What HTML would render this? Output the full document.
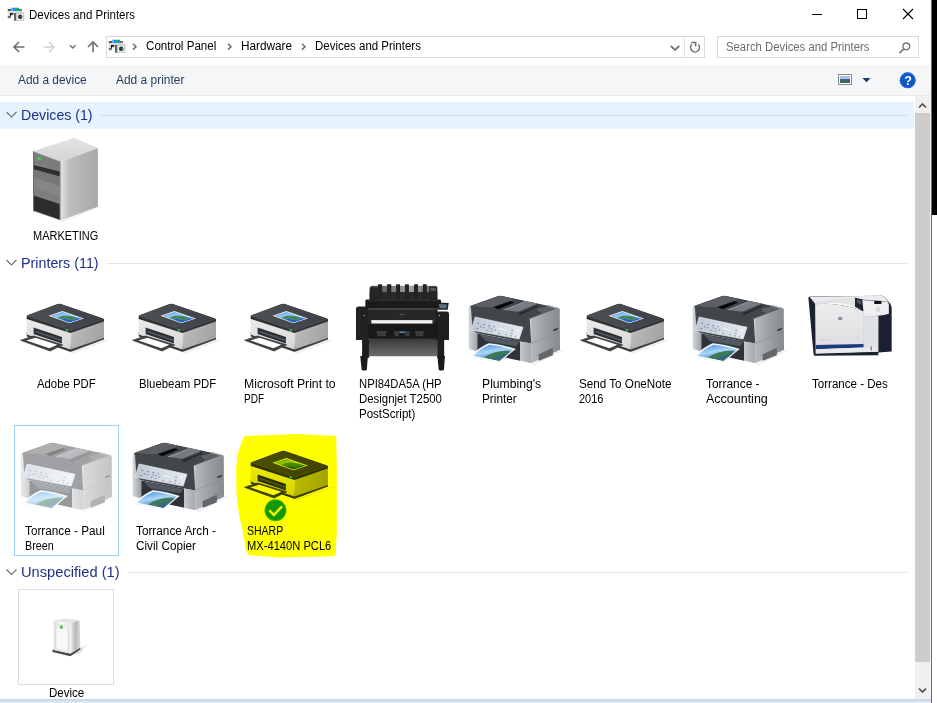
<!DOCTYPE html>
<html lang="en"><head><meta charset="utf-8"><title>Devices and Printers</title>
<style>
html,body{margin:0;padding:0}
body{width:937px;height:703px;position:relative;overflow:hidden;background:#fff;font-family:"Liberation Sans",sans-serif;font-size:12px;color:#000}
.a{position:absolute}
.t{position:absolute;white-space:pre;line-height:20px;height:20px;transform-origin:0 50%}
svg{position:absolute;overflow:visible}

</style></head>
<body>
<svg width="0" height="0" style="position:absolute">
<defs>
<g id="dpicon">
  <rect x="7.8" y="9" width="14.1" height="9.2" fill="#dcdcdc"/>
  <rect x="7.8" y="9" width="14.1" height="2" fill="#5a5a5a"/>
  <rect x="10.9" y="7.8" width="8.1" height="3.2" fill="#1e8cf0"/>
  <rect x="11.2" y="7.8" width="1.4" height="3.2" fill="#7cc4ff"/>
  <rect x="15" y="7.8" width="2.1" height="3.2" fill="#10c050"/>
  <rect x="20" y="9.6" width="1.3" height="1.4" fill="#20f020"/>
  <rect x="7.8" y="16" width="2.6" height="2.2" fill="#6a6e70"/>
  <rect x="10" y="13" width="3.2" height="1.6" fill="#111"/>
  <rect x="10" y="13" width="1.2" height="3.6" fill="#111"/>
  <rect x="11.2" y="15.5" width="3" height="3.3" fill="#fff"/>
  <rect x="14.1" y="13" width="1.8" height="7.8" fill="#555"/>
  <rect x="16.3" y="12.8" width="7.7" height="7.9" fill="#cfcfcf" stroke="#bdbdbd" stroke-width="0.5"/>
  <rect x="17.2" y="13.8" width="5.9" height="6" fill="#f1f1f1"/>
  <circle cx="20.2" cy="16.8" r="2.2" fill="#2d3134"/>
  <path d="M20.2 16.8l1.4-1.6a2.2 2.2 0 0 1 .6 2.6z" fill="#1f8f96"/>
</g>

<!-- simple printer, coordinates local: origin = (16,296) of first instance -->
<linearGradient id="prR" x1="0" y1="0" x2="1" y2="0.3">
  <stop offset="0" stop-color="#e6e6e6"/><stop offset="0.22" stop-color="#b8b8b8"/><stop offset="1" stop-color="#a3a3a3"/>
</linearGradient>
<linearGradient id="prL" x1="0" y1="0" x2="0" y2="1">
  <stop offset="0" stop-color="#ebebeb"/><stop offset="1" stop-color="#d6d6d6"/>
</linearGradient>
<linearGradient id="prT" x1="0" y1="0" x2="1" y2="0">
  <stop offset="0" stop-color="#4d5155"/><stop offset="1" stop-color="#3e4246"/>
</linearGradient>
<linearGradient id="sky" x1="0" y1="0" x2="1" y2="1">
  <stop offset="0" stop-color="#5b9bf0"/><stop offset="0.5" stop-color="#a8d4f5"/><stop offset="1" stop-color="#2f6fd0"/>
</linearGradient>
<g id="prn">
  <path d="M54.4 56.2L89 44.2l7-1-40 14.5z" fill="#000" opacity="0.08"/>
  <!-- base -->
  <path d="M10.7 36L54.4 50 88 39.5V43.6L55.6 55.6Q54.4 56 53.2 55.6L10.7 40.6z" fill="#3a3d40"/>
  <!-- body left -->
  <path d="M10.7 22.5L54.4 36.6V53.4L10.7 38.6z" fill="url(#prL)"/>
  <!-- body right -->
  <path d="M54.4 36.6L88 25.4V42L54.4 53.4z" fill="url(#prR)"/>
  <!-- slot -->
  <path d="M17.6 31.4L45.9 41v6.6L17.6 38z" fill="#2b2e31"/>
  <path d="M19.6 34.4L45.9 43.4v2L19.6 36.4z" fill="#50555a"/>
  <!-- tray -->
  <path d="M4.6 44.3L17.6 40 46.6 48.8 34.2 55z" fill="#3c4043" stroke="#3c4043" stroke-width="0.8" stroke-linejoin="round"/>
  <path d="M10.2 44.4L19.4 41.8 41.4 48.7 33.4 52.2z" fill="#fdfdfd"/>
  <!-- top slab (lip + top) -->
  <path d="M10.7 20.2Q10.7 19.6 12 19.1L41.5 8Q43.2 7.4 45 8L86.5 22.2Q88 22.8 88 23.5V25.6L56 36.6Q54.4 37.2 52.8 36.6L10.7 22.9z" fill="#303336"/>
  <path d="M11.5 19.6L42 8.2Q43.2 7.8 44.6 8.2L87 22.8 55.6 33.8Q54.4 34.2 53 33.8z" fill="url(#prT)"/>
  <path d="M11.5 19.9L53 34Q54.4 34.5 55.6 34L87 23" stroke="#5d6165" stroke-width="0.6" fill="none"/>
  <!-- photo -->
  <path d="M32.5 19.7L46.4 14.9 67.8 22.4 53.4 27.2z" fill="#f4f6f8"/>
  <path d="M34.6 19.7L46.4 15.7 65.6 22.4 53.4 26.4z" fill="url(#sky)"/>
  <path d="M41 21.9Q49 17.8 57 20.6L61.5 22.3 56 24.2Q49 22 44 23z" fill="#3f7f4a" opacity="0.9"/>
  <path d="M44 23Q49 22 56 24.2L62 22.2 65.6 22.4 53.4 26.4z" fill="#2b62c4"/>
  <!-- led -->
  <circle cx="50.7" cy="34.4" r="1.1" fill="#2fe02f"/>
</g>

<!-- server icon: absolute coords -->
<linearGradient id="svR" x1="0" y1="0" x2="1" y2="0">
  <stop offset="0" stop-color="#e2e2e2"/><stop offset="0.25" stop-color="#bdbdbd"/><stop offset="1" stop-color="#a8a8a8"/>
</linearGradient>
<linearGradient id="svT" x1="0" y1="0" x2="0" y2="1">
  <stop offset="0" stop-color="#e4e4e4"/><stop offset="1" stop-color="#d3d3d3"/>
</linearGradient>
<g id="server">
  <path d="M60.7 221L98 207.3 103 206 62 222.5z" fill="#000" opacity="0.06"/>
  <!-- right face -->
  <path d="M60.7 161.6L97.9 147.9V206.8L60.7 220.6z" fill="url(#svR)"/>
  <!-- top face (server) -->
  <path d="M33.1 151.3L74 137.7 97.9 147.9 60.7 161.6z" fill="url(#svT)"/>
  <!-- front face -->
  <path d="M33.1 151.3L60.7 161.6V220.6L33.1 211z" fill="#8a8a8a"/>
  <path d="M33.9 152.6L59.6 162.2V172L33.9 163.4z" fill="#7c7c7c"/>
  <path d="M33.9 165L59.6 171.5V176.5L33.9 169.5z" fill="#2e2e2e"/>
  <path d="M33.9 169.5L59.6 176.5V186L33.9 177.8z" fill="#777"/>
  <path d="M33.9 178.4L59.6 186.6V195L33.9 186.5z" fill="#858585"/>
  <path d="M33.9 187L59.6 195.6V203.5L33.9 195z" fill="#7e7e7e"/>
  <path d="M33.9 195.5L59.6 204V219.6L33.9 210.4z" fill="#2c2c2c"/>
  <path d="M33.1 151.3V211l1 .4V151.6z" fill="#6a6a6a"/>
  <circle cx="39.3" cy="158.6" r="1.6" fill="#2fe03a"/>
</g>

<linearGradient id="mfR" x1="0" y1="0" x2="1" y2="0">
  <stop offset="0" stop-color="#dfe1e4"/><stop offset="0.07" stop-color="#b4b7bb"/><stop offset="0.5" stop-color="#9ca0a4"/><stop offset="1" stop-color="#868a8f"/>
</linearGradient>
<linearGradient id="mfL" x1="0" y1="0" x2="1" y2="0">
  <stop offset="0" stop-color="#d4d7da"/><stop offset="1" stop-color="#9da1a6"/>
</linearGradient>
<linearGradient id="mfP" x1="0" y1="0" x2="1" y2="0">
  <stop offset="0" stop-color="#c3c6ca"/><stop offset="1" stop-color="#a6aaaf"/>
</linearGradient>
<linearGradient id="mfSky" x1="0.2" y1="0" x2="0.6" y2="1">
  <stop offset="0" stop-color="#4f97e6"/><stop offset="0.45" stop-color="#a9d6f6"/><stop offset="1" stop-color="#2a6cc6"/>
</linearGradient>
<linearGradient id="mfCP" x1="0" y1="0" x2="1" y2="0">
  <stop offset="0" stop-color="#bcc5d2"/><stop offset="0.5" stop-color="#d4dbe5"/><stop offset="1" stop-color="#e4e9f0"/>
</linearGradient>
<g id="mfp" transform="scale(0.12804)">
  <path d="M556 618L790 505 830 500 580 625z" fill="#000" opacity="0.07"/>
  <!-- right face -->
  <path d="M545 268L768 180Q779 178 779 192L781 505 556 612z" fill="url(#mfR)"/>
  <path d="M556 457L780 362" stroke="#80848a" stroke-width="4" fill="none"/>
  <path d="M615 540L725 490V548L615 592z" fill="#5d6166"/>
  <path d="M635 532V584M655 523V576M675 514V567M695 505V558M712 497V552" stroke="#7b7f84" stroke-width="4"/>
  <path d="M728 347L765 334V350L728 362z" fill="#3a3d41"/>
  <!-- left pillar -->
  <path d="M68 180Q68 166 82 161L102 155V350L135 375V520L68 500z" fill="url(#mfL)"/>
  <!-- dark body -->
  <path d="M82 164Q76 170 86 178L98 352 135 377 470 442 556 457 545 268 768 180 330 86Q312 82 298 86z" fill="#42464b"/>
  <!-- top face (mfp) -->
  <path d="M98 158L300 88Q312 84 328 88L758 181 545 262z" fill="#43474c"/>
  <path d="M98 158L300 88Q312 84 328 88L430 110 262 172Q200 176 120 166z" fill="#5b5f64"/>
  <path d="M545 262L758 181 768 180 545 270z" fill="#a4a8ad"/>
  <path d="M600 190L700 160 758 181 640 226z" fill="#5d6166"/>
  <path d="M690 158L768 180 756 185 680 164z" fill="#a9adb2"/>
  <!-- ADF -->
  <path d="M262 172L395 126 426 136 300 190z" fill="#08080a"/>
  <path d="M445 222L612 154V168L470 236z" fill="#2a2d31"/>
  <path d="M338 194L508 126 608 144 455 208z" fill="#777c82"/>
  <path d="M338 194L508 126 520 128 352 197z" fill="#92979d"/>
  <!-- control panel -->
  <path d="M118 250L492 330 462 422 88 352z" fill="url(#mfCP)" stroke="#eef1f5" stroke-width="5" stroke-linejoin="round"/>
  <path d="M300 328L378 344 374 364 296 348z" fill="#e9eef5" stroke="#a9b2c0" stroke-width="2"/>
  <g stroke="#5c6b85" stroke-width="6" fill="none">
    <path d="M135 298l14 3M180 308l14 3M222 316l14 3M262 324l10 2"/>
    <path d="M128 338l14 3M155 326l14 3M182 332l10 2M208 352l14 3M222 334l12 3M245 340l10 2M240 360l12 3M270 350l12 3"/>
    <path d="M300 376l12 3M355 386l12 3M400 352l14 3M396 376l14 3M392 396l12 3M428 400l8 2"/>
  </g>
  <circle cx="450" cy="352" r="9" fill="#f6f8fb"/>
  <!-- opening -->
  <path d="M135 378L470 442V592L135 520z" fill="#2f3338"/>
  <path d="M150 385L462 445 440 478 205 440z" fill="#505860"/>
  <!-- right front pillar -->
  <path d="M470 442L556 457V612L470 592z" fill="url(#mfP)"/>
  <!-- paper -->
  <path d="M225 455C300 462 370 480 435 500C395 530 350 568 315 605L85 560C120 515 165 480 225 455z" fill="#f9fbfd" stroke="#d5dbe2" stroke-width="2"/>
  <path d="M230 467C295 473 360 489 413 505C380 532 342 565 309 591L107 552C137 518 177 489 230 467z" fill="url(#mfSky)"/>
  <path d="M185 566C255 525 330 505 398 518C370 540 338 568 309 591z" fill="#3d7a55"/>
  <path d="M250 580C300 550 350 535 385 530C360 550 335 570 309 591z" fill="#2d5f9f" opacity="0.55"/>
</g>

<linearGradient id="djBin" x1="0" y1="0" x2="0" y2="1">
  <stop offset="0" stop-color="#383838"/><stop offset="1" stop-color="#6c6c6c"/>
</linearGradient>
<linearGradient id="djSt" x1="0" y1="0" x2="1" y2="0">
  <stop offset="0" stop-color="#4a4a4a"/><stop offset="0.6" stop-color="#a5a5a5"/><stop offset="1" stop-color="#5a5a5a"/>
</linearGradient>
<g id="dj" transform="scale(0.14225)">
  <!-- stacker -->
  <rect x="145" y="55" width="462" height="60" fill="url(#djSt)"/>
  <rect x="138" y="98" width="476" height="56" fill="#2a2a2a"/>
  <path d="M138 65h58v90h-58zM556 62h58v92h-58z" fill="#262626"/>
  <rect x="565" y="70" width="38" height="22" fill="#555"/>
  <g fill="#232323">
    <rect x="196" y="44" width="30" height="100" rx="4"/><rect x="260" y="44" width="30" height="100" rx="4"/>
    <rect x="324" y="44" width="28" height="100" rx="4"/><rect x="386" y="44" width="28" height="100" rx="4"/>
    <rect x="450" y="44" width="28" height="100" rx="4"/><rect x="512" y="44" width="28" height="100" rx="4"/>
  </g>
  <!-- legs -->
  <path d="M85 430h50v130h-50zM612 430h50v130h-50z" fill="#1d1d1d"/>
  <path d="M72 548h54l-8 98q-18 8-36 0zM614 548h54l-8 98q-18 8-36 0z" fill="#1b1b1b"/>
  <!-- bin -->
  <rect x="133" y="422" width="482" height="128" fill="url(#djBin)"/>
  <!-- body -->
  <path d="M60 200h70v235H42V218q0-18 18-18z" fill="#222"/>
  <rect x="126" y="212" width="490" height="120" fill="#272727"/>
  <path d="M600 236h80q16 0 16 16v183h-96z" fill="#1f1f1f"/>
  <rect x="126" y="322" width="492" height="104" fill="#191919"/>
  <rect x="150" y="296" width="430" height="24" fill="#f2f2f2"/>
  <rect x="130" y="216" width="470" height="5" fill="#6a6a6a"/>
  <g fill="#3d3d3d">
    <path d="M185 372h75l-10 38h-55zM308 374h40l-6 36h-28zM384 374h38l-6 36h-26zM455 372h66l-10 38h-46z"/>
  </g>
  <rect x="348" y="376" width="38" height="10" fill="#5d92d6"/>
  <rect x="350" y="252" width="34" height="8" fill="#555"/>
  <!-- roll cover -->
  <rect x="108" y="152" width="532" height="60" rx="10" fill="#1a1a1a"/>
  <rect x="120" y="158" width="508" height="5" fill="#3c3c3c"/>
  <!-- screen -->
  <path d="M606 172l88 4-7 48h-70z" fill="#1e1e1e"/>
  <path d="M624 183l58 3-4 27h-48z" fill="#5e7389"/>
  <circle cx="101" cy="263" r="5" fill="#9a9a9a"/>
  <circle cx="629" cy="264" r="5" fill="#c8b24a"/>
</g>

<linearGradient id="ljF" x1="0" y1="0" x2="0" y2="1">
  <stop offset="0" stop-color="#ececee"/><stop offset="1" stop-color="#dcdde0"/>
</linearGradient>
<g id="lj" transform="scale(0.12804)">
  <!-- dark frame -->
  <path d="M66 105Q64 92 78 90L640 84Q660 84 690 128Q716 150 716 175L716 520 612 528 612 548 120 552Q108 552 106 540z" fill="#1b2130"/>
  <!-- top -->
  <path d="M72 91L640 84Q658 86 690 130L500 116 430 100 120 148z" fill="#ececee"/>
  <path d="M72 91L120 148V160L68 108z" fill="#2a2f3c"/>
  <!-- front -->
  <path d="M118 150Q300 130 496 205L610 250V522L122 536z" fill="url(#ljF)"/>
  <path d="M118 150Q300 110 430 165L480 200 496 205Q300 130 118 150z" fill="#f6f6f7"/>
  <path d="M120 130Q280 100 430 100L430 168Q300 118 118 152z" fill="#e2e3e5"/>
  <!-- output slot -->
  <path d="M430 100L482 120 486 198 430 170z" fill="#20242c"/>
  <path d="M446 112L476 124 478 150 446 138z" fill="#555b66"/>
  <!-- control column -->
  <path d="M486 118L680 130Q694 134 694 150V225Q660 238 614 240L500 250 496 205z" fill="#eeeff1"/>
  <path d="M500 250L612 240V522H500z" fill="#e1e2e5"/>
  <path d="M500 250L612 240" stroke="#bfc1c6" stroke-width="3"/>
  <path d="M498 205V522" stroke="#c4c6cb" stroke-width="3"/>
  <rect x="580" y="124" width="56" height="24" fill="#0c0c10"/>
  <path d="M590 175l30-6 8 14-6 26-20 4z" fill="#d5d7db"/>
  <!-- blue band -->
  <path d="M124 468L496 460V488L124 502z" fill="#1a3a7c"/>
  <path d="M124 502L496 488 600 486V520L126 534z" fill="#e9eaec"/>
  <rect x="552" y="480" width="8" height="32" fill="#5a5f6a"/>
  <!-- logo -->
  <rect x="298" y="250" width="32" height="24" rx="5" fill="#8a8d94"/>
  <path d="M150 428h90M430 412h36" stroke="#b6b9c0" stroke-width="4"/>
</g>

<linearGradient id="dvF" x1="0" y1="0" x2="1" y2="0">
  <stop offset="0" stop-color="#dcdcdc"/><stop offset="0.5" stop-color="#fafafa"/><stop offset="1" stop-color="#e6e6e6"/>
</linearGradient>
<linearGradient id="dvS" x1="0" y1="0" x2="1" y2="0">
  <stop offset="0" stop-color="#f2f2f2"/><stop offset="0.5" stop-color="#b9b9b9"/><stop offset="1" stop-color="#d8d8d8"/>
</linearGradient>
<g id="dev" transform="scale(0.17492)">
  <path d="M345 430L405 392 445 360 400 420z" fill="#000" opacity="0.12"/>
  <path d="M243 398L345 420 402 386V398L345 436 243 412z" fill="#4a4a4a"/>
  <path d="M250 240Q250 232 258 232L345 248V420L250 400z" fill="url(#dvF)"/>
  <path d="M262 285Q262 252 296 256Q332 262 332 296V408L262 395z" fill="#f7f7f7" stroke="#d0d0d0" stroke-width="3"/>
  <path d="M345 248L392 230Q398 230 398 238L402 386 345 420z" fill="url(#dvS)"/>
  <path d="M256 232L312 220 394 229 345 248z" fill="#e3e3e3"/>
  <circle cx="293" cy="268" r="10" fill="#3db43d"/>
  <circle cx="291" cy="265" r="4" fill="#b5f0a5"/>
</g>
</defs>
</svg>

<!-- window chrome -->
<div class="a" style="left:932px;top:0;width:5px;height:215px;background:#000"></div>
<div class="a" style="left:931px;top:0;width:1px;height:703px;background:#1a84d8"></div>
<!-- title bar icon -->
<svg style="left:7px;top:7px" width="18" height="15" viewBox="7 7 18 15"><use href="#dpicon"/></svg>
<!-- window buttons -->
<svg style="left:805px;top:0" width="120" height="30" viewBox="805 0 120 30">
  <path d="M812 14.5h10" stroke="#000" stroke-width="1" fill="none"/>
  <rect x="857.5" y="9.5" width="9" height="9" stroke="#000" stroke-width="1" fill="none"/>
  <path d="M903 9l10 10M913 9l-10 10" stroke="#000" stroke-width="1.1" fill="none"/>
</svg>
<!-- nav arrows -->
<svg style="left:0;top:30px" width="106" height="35" viewBox="0 30 106 35">
  <path d="M24.5 47H14M19 42l-5 5 5 5" stroke="#6e6e6e" stroke-width="1.6" fill="none"/>
  <path d="M43.5 47H54M49 42l5 5-5 5" stroke="#d2d2d2" stroke-width="1.6" fill="none"/>
  <path d="M70 45.2l2.8 2.8 2.8-2.8" stroke="#6e6e6e" stroke-width="1.3" fill="none"/>
  <path d="M93 52.3V42M88 47l5-5 5 5" stroke="#6e6e6e" stroke-width="1.6" fill="none"/>
</svg>
<!-- address box -->
<div class="a" style="left:106px;top:36px;width:599px;height:22px;border:1px solid #d9d9d9;box-sizing:border-box;background:#fff"></div>
<div class="a" style="left:684px;top:36px;width:1px;height:22px;background:#e1e1e1"></div>
<svg style="left:108px;top:39px" width="18" height="15" viewBox="7 7 18 15"><use href="#dpicon"/></svg>
<svg style="left:128px;top:40px" width="300" height="14" viewBox="128 40 300 14">
  <path d="M133 43.8l3 2.9-3 2.9" stroke="#6a6a6a" stroke-width="1.5" fill="none"/>
  <path d="M228 43.8l3 2.9-3 2.9" stroke="#6a6a6a" stroke-width="1.5" fill="none"/>
  <path d="M302 43.8l3 2.9-3 2.9" stroke="#6a6a6a" stroke-width="1.5" fill="none"/>
</svg>
<svg style="left:665px;top:38px" width="40" height="18" viewBox="665 38 40 18">
  <path d="M670.8 45.9l4.2 4.2 4.2-4.2" stroke="#6f6f6f" stroke-width="1.8" fill="none"/>
  <path d="M698.3 44.6a4.4 4.4 0 1 1-6.4-.2" stroke="#6f6f6f" stroke-width="1.5" fill="none"/>
  <path d="M691.2 42.5h4.4v4" stroke="#6f6f6f" stroke-width="1.5" fill="none"/>
</svg>
<!-- search box -->
<div class="a" style="left:717px;top:36px;width:202px;height:22px;border:1px solid #d9d9d9;box-sizing:border-box;background:#fff"></div>
<svg style="left:896px;top:40px" width="18" height="16" viewBox="896 40 18 16">
  <circle cx="906.3" cy="46.3" r="3.4" stroke="#7a7a7a" stroke-width="1.5" fill="none"/>
  <path d="M903.8 48.8l-4.3 4.3" stroke="#7a7a7a" stroke-width="1.8" fill="none"/>
</svg>
<!-- toolbar -->
<div class="a" style="left:0;top:65px;width:931px;height:30px;background:#f5f6f7;border-bottom:1px solid #e9e9e9"></div>
<svg style="left:836px;top:70px" width="90" height="22" viewBox="836 70 90 22">
  <rect x="838.5" y="74.5" width="13" height="10" fill="#fff" stroke="#8a8a8a" stroke-width="1"/>
  <rect x="840" y="76" width="10" height="7" fill="#3a5f8f"/>
  <rect x="840" y="76" width="10" height="3" fill="#a9c4e4"/>
  <path d="M840 83l4-3 6 3z" fill="#3d6b3d"/>
  <path d="M862.5 78h8l-4 4.3z" fill="#1e395b"/>
  <circle cx="907.7" cy="80.3" r="8" fill="#0b57c4"/>
  <circle cx="907.7" cy="80.3" r="7.3" fill="none" stroke="#2c72d6" stroke-width="0.8"/>
</svg>
<div class="a" style="left:900px;top:71.5px;width:16px;height:18px;line-height:18px;text-align:center;color:#fff;font-weight:bold;font-size:12.5px">?</div>
<!-- scrollbar -->
<div class="a" style="left:915px;top:96px;width:16px;height:603px;background:#f0f0f0"></div>
<div class="a" style="left:915px;top:113px;width:15px;height:549px;background:#cdcdcd"></div>
<svg style="left:915px;top:96px" width="16" height="603" viewBox="915 96 16 603">
  <path d="M919 107.5l3.5-3.5 3.5 3.5" stroke="#505050" stroke-width="1.7" fill="none"/>
  <path d="M919 688.5l3.5 3.5 3.5-3.5" stroke="#505050" stroke-width="1.7" fill="none"/>
</svg>
<!-- bottom strip -->
<div class="a" style="left:0;top:699px;width:931px;height:4px;background:linear-gradient(#c3d2e6,#e6edf6)"></div>
<!-- group headers -->
<div class="a" style="left:0;top:102px;width:914px;height:27px;background:#e5f3ff"></div>
<div class="a" style="left:101px;top:115px;width:806px;height:1px;background:#c5d9ea"></div>
<div class="a" style="left:107px;top:263px;width:800px;height:1px;background:#e2e2e2"></div>
<div class="a" style="left:128px;top:572px;width:779px;height:1px;background:#e2e2e2"></div>
<svg style="left:0;top:100px" width="20" height="500" viewBox="0 100 20 500">
  <path d="M6.5 112l5 5 5-5" stroke="#707070" stroke-width="1.1" fill="none"/>
  <path d="M6.5 260l5 5 5-5" stroke="#707070" stroke-width="1.1" fill="none"/>
  <path d="M6.5 569.5l5 5 5-5" stroke="#707070" stroke-width="1.1" fill="none"/>
</svg>
<!-- selected item box -->
<div class="a" style="left:14px;top:425px;width:105px;height:131px;border:1px solid #99d1ff;box-sizing:border-box;background:#fff"></div>
<!-- device box -->
<div class="a" style="left:18px;top:589px;width:96px;height:96px;border:1px solid #dcdcdc;box-sizing:border-box;background:#fff"></div>
<!-- icons -->
<svg style="left:0;top:130px" width="130" height="100" viewBox="0 130 130 100"><use href="#server"/></svg>
<svg style="left:16px;top:296px" width="100" height="62" viewBox="0 0 100 62"><use href="#prn"/></svg>
<svg style="left:128px;top:296px" width="100" height="62" viewBox="0 0 100 62"><use href="#prn"/></svg>
<svg style="left:240px;top:296px" width="100" height="62" viewBox="0 0 100 62"><use href="#prn"/></svg>
<svg style="left:576px;top:296px" width="100" height="62" viewBox="0 0 100 62"><use href="#prn"/></svg>
<svg style="left:460px;top:285px" width="110" height="90" viewBox="0 0 110 90"><use href="#mfp"/></svg>
<svg style="left:684px;top:285px" width="110" height="90" viewBox="0 0 110 90"><use href="#mfp"/></svg>
<svg style="left:12px;top:432px;opacity:0.5" width="110" height="90" viewBox="0 0 110 90"><use href="#mfp"/></svg>
<svg style="left:124px;top:432px" width="110" height="90" viewBox="0 0 110 90"><use href="#mfp"/></svg>
<svg style="left:350px;top:278px" width="100" height="100" viewBox="0 0 100 100"><use href="#dj"/></svg>
<svg style="left:800px;top:285px" width="100" height="90" viewBox="0 0 100 90"><use href="#lj"/></svg>
<svg style="left:10px;top:580px" width="120" height="120" viewBox="0 0 120 120"><use href="#dev"/></svg>
<svg style="left:240px;top:443px" width="100" height="62" viewBox="0 0 100 62"><use href="#prn"/></svg>
<svg style="left:262px;top:497px" width="28" height="28" viewBox="262 497 28 28">
  <circle cx="275.5" cy="510.3" r="11" fill="#3bb53b"/>
  <circle cx="275.5" cy="510.3" r="10" fill="#12981a"/>
  <path d="M269.3 510.4l4.6 4.6 8.2-8.8" stroke="#fff" stroke-width="2.3" fill="none"/>
</svg>
<svg style="left:230px;top:428px;mix-blend-mode:multiply" width="115" height="140" viewBox="230 428 115 140">
  <path d="M244.7 436L241.7 441.5 237.4 455 236.1 468.5 236.5 495 239.2 516 242.9 532 246 550 248.4 555 279 557.6 327 556.4 335.5 555.7 336.8 532 336.8 465 336.2 436 296 434z" fill="#ffff00"/>
</svg>

<div class="t" style="left:28.90px;top:4.84px;font-size:12px;color:#000;transform:scaleX(0.9582)">Devices and Printers</div>
<div class="t" style="left:146.20px;top:35.84px;font-size:12px;color:#000;transform:scaleX(0.9671)">Control Panel</div>
<div class="t" style="left:240.80px;top:35.84px;font-size:12px;color:#000;transform:scaleX(0.9824)">Hardware</div>
<div class="t" style="left:314.80px;top:35.84px;font-size:12px;color:#000;transform:scaleX(0.9564)">Devices and Printers</div>
<div class="t" style="left:725.50px;top:36.84px;font-size:12px;color:#6d6d6d;transform:scaleX(0.9431)">Search Devices and Printers</div>
<div class="t" style="left:17.90px;top:69.84px;font-size:12px;color:#1e395b;transform:scaleX(0.9899)">Add a device</div>
<div class="t" style="left:116.30px;top:69.84px;font-size:12px;color:#1e395b;transform:scaleX(0.9957)">Add a printer</div>
<div class="t" style="left:21.30px;top:104.63px;font-size:15.5px;color:#1e3287;transform:scaleX(0.9128)">Devices (1)</div>
<div class="t" style="left:21.30px;top:252.63px;font-size:15.5px;color:#1e3287;transform:scaleX(0.9226)">Printers (11)</div>
<div class="t" style="left:21.30px;top:561.63px;font-size:15.5px;color:#1e3287;transform:scaleX(0.9462)">Unspecified (1)</div>
<div class="t" style="left:32.90px;top:225.84px;font-size:12px;color:#000;transform:scaleX(0.9155)">MARKETING</div>
<div class="t" style="left:36.70px;top:373.84px;font-size:12px;color:#000;transform:scaleX(0.9452)">Adobe PDF</div>
<div class="t" style="left:138.80px;top:373.84px;font-size:12px;color:#000;transform:scaleX(0.9481)">Bluebeam PDF</div>
<div class="t" style="left:243.70px;top:373.84px;font-size:12px;color:#000;transform:scaleX(1.0178)">Microsoft Print to</div>
<div class="t" style="left:243.70px;top:388.84px;font-size:12px;color:#000;transform:scaleX(0.8391)">PDF</div>
<div class="t" style="left:358.80px;top:373.84px;font-size:12px;color:#000;transform:scaleX(0.9381)">NPI84DA5A (HP</div>
<div class="t" style="left:358.80px;top:388.84px;font-size:12px;color:#000;transform:scaleX(0.9517)">Designjet T2500</div>
<div class="t" style="left:358.80px;top:403.84px;font-size:12px;color:#000;transform:scaleX(0.9603)">PostScript)</div>
<div class="t" style="left:482.40px;top:373.84px;font-size:12px;color:#000;transform:scaleX(1.0153)">Plumbing's</div>
<div class="t" style="left:482.40px;top:388.84px;font-size:12px;color:#000;transform:scaleX(0.9806)">Printer</div>
<div class="t" style="left:578.80px;top:373.84px;font-size:12px;color:#000;transform:scaleX(0.9716)">Send To OneNote</div>
<div class="t" style="left:578.80px;top:388.84px;font-size:12px;color:#000;transform:scaleX(0.9154)">2016</div>
<div class="t" style="left:706.40px;top:373.84px;font-size:12px;color:#000;transform:scaleX(0.9907)">Torrance -</div>
<div class="t" style="left:706.40px;top:388.84px;font-size:12px;color:#000;transform:scaleX(1.0407)">Accounting</div>
<div class="t" style="left:811.90px;top:373.84px;font-size:12px;color:#000;transform:scaleX(0.9628)">Torrance - Des</div>
<div class="t" style="left:24.90px;top:520.84px;font-size:12px;color:#000;transform:scaleX(0.9802)">Torrance - Paul</div>
<div class="t" style="left:24.90px;top:535.84px;font-size:12px;color:#000;transform:scaleX(0.8969)">Breen</div>
<div class="t" style="left:135.60px;top:520.84px;font-size:12px;color:#000;transform:scaleX(0.9817)">Torrance Arch -</div>
<div class="t" style="left:135.60px;top:535.84px;font-size:12px;color:#000;transform:scaleX(0.9774)">Civil Copier</div>
<div class="t" style="left:246.80px;top:520.84px;font-size:12px;color:#000;transform:scaleX(0.8756)">SHARP</div>
<div class="t" style="left:246.80px;top:535.84px;font-size:12px;color:#000;transform:scaleX(0.9291)">MX-4140N PCL6</div>
<div class="t" style="left:48.90px;top:682.84px;font-size:12px;color:#000;transform:scaleX(0.9611)">Device</div>
</body></html>
